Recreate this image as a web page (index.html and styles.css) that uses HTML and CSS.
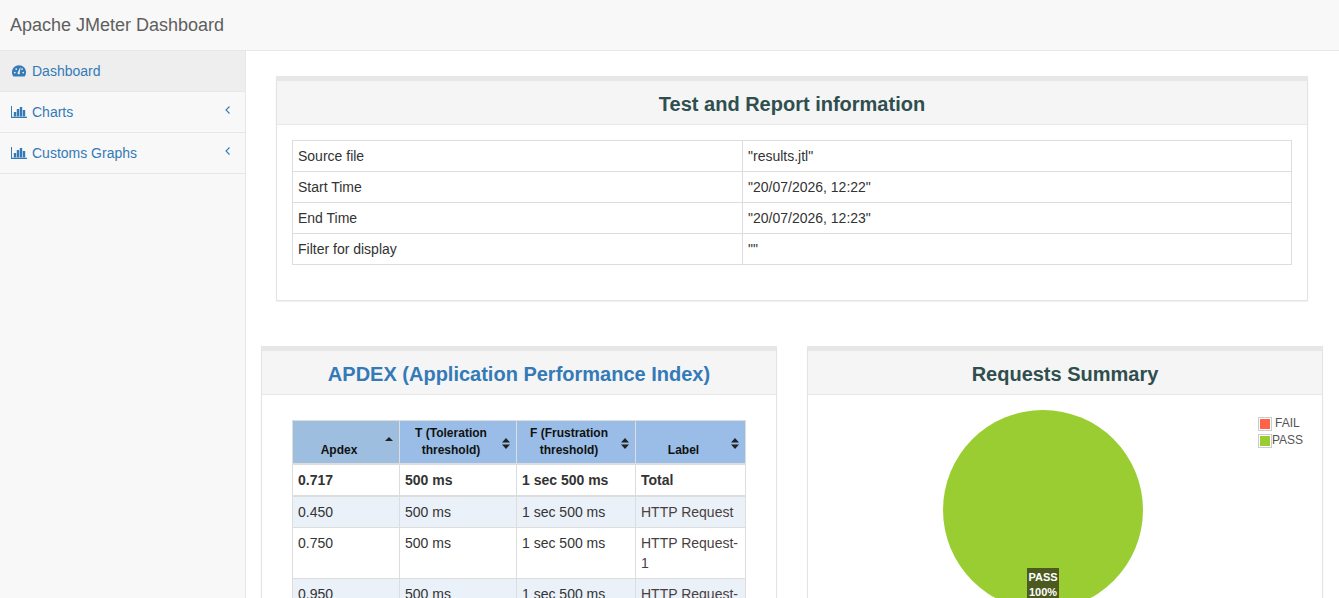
FILE: index.html
```html
<!DOCTYPE html>
<html lang="en">
<head>
  <meta charset="UTF-8">
  <meta name="viewport" content="width=device-width, initial-scale=1.0">
  <title>Apache JMeter Dashboard</title>
  <link rel="stylesheet" href="styles.css">
</head>
<body>
  <nav class="navbar">
    <a class="brand" href="#">Apache JMeter Dashboard</a>
  </nav>

  <div class="layout">
    <!-- Sidebar -->
    <aside class="sidebar">
      <a class="side-item active" href="#">
        <svg class="side-icon gauge" viewBox="0 0 14 12"><path fill-rule="evenodd" d="M7 .3C3.100.3 0 3.400 0 7.300c0 1.600.5 3 1.300 4.200h11.400c.8-1.200 1.300-2.600 1.300-4.200C14 3.400 10.900.3 7 .3zM2.800 8.500a.9.9 0 1 1 0-1.800.9.9 0 0 1 0 1.800zM4.200 5a.9.9 0 1 1 0-1.800.9.9 0 0 1 0 1.800zM7.700 8.800a1.200 1.200 0 0 1-1.900-1.500L8.100 2.400l.5.200-.9 4.800c.3.400.3 1 0 1.400zM10 5a.9.9 0 1 1 0-1.800.9.9 0 0 1 0 1.800zM11.200 8.500a.9.9 0 1 1 0-1.800.9.9 0 0 1 0 1.800z"/></svg>
        <span>Dashboard</span>
      </a>
      <a class="side-item" href="#">
        <svg class="side-icon" viewBox="0 0 16 12"><path d="M0 0h1v10.800h15V12H0z"/><path d="M2.800 6h2.400v4.500H2.800zM5.800 3h2.400v7.500H5.800zM8.800 1h2.400v9.500H8.800zM11.800 4h2.400v6.500h-2.400z"/></svg>
        <span>Charts</span>
        <svg class="side-arrow" viewBox="0 0 5 8"><path d="M4.500.5 1 4l3.500 3.500" fill="none" stroke="currentColor" stroke-width="1.100"/></svg>
      </a>
      <a class="side-item" href="#">
        <svg class="side-icon" viewBox="0 0 16 12"><path d="M0 0h1v10.800h15V12H0z"/><path d="M2.800 6h2.400v4.500H2.800zM5.800 3h2.400v7.500H5.800zM8.800 1h2.400v9.500H8.800zM11.800 4h2.400v6.500h-2.400z"/></svg>
        <span>Customs Graphs</span>
        <svg class="side-arrow" viewBox="0 0 5 8"><path d="M4.500.5 1 4l3.500 3.500" fill="none" stroke="currentColor" stroke-width="1.100"/></svg>
      </a>
    </aside>

    <main class="content">
      <!-- Test and Report information -->
      <section class="panel panel-info">
        <h2 class="panel-heading">Test and Report information</h2>
        <div class="panel-body info-body">
          <table class="info-table">
            <tr><td class="info-key">Source file</td><td>"results.jtl"</td></tr>
            <tr><td class="info-key">Start Time</td><td>"20/07/2026, 12:22"</td></tr>
            <tr><td class="info-key">End Time</td><td>"20/07/2026, 12:23"</td></tr>
            <tr><td class="info-key">Filter for display</td><td>""</td></tr>
          </table>
        </div>
      </section>

      <div class="panel-row">
        <!-- APDEX -->
        <section class="panel">
          <h2 class="panel-heading heading-link">APDEX (Application Performance Index)</h2>
          <div class="panel-body apdex-body">
            <table class="apdex-table">
              <colgroup>
                <col class="col-apdex"><col class="col-t"><col class="col-f"><col class="col-label">
              </colgroup>
              <thead>
                <tr>
                  <th class="sorted">Apdex
                    <svg class="sort-icon sort-up" viewBox="0 0 8 4"><path d="M4 0l4 4H0z"/></svg>
                  </th>
                  <th>T (Toleration threshold)
                    <svg class="sort-icon" viewBox="0 0 8 11"><path d="M4 0l4 4.500H0zM4 11 0 6.500h8z"/></svg>
                  </th>
                  <th>F (Frustration threshold)
                    <svg class="sort-icon" viewBox="0 0 8 11"><path d="M4 0l4 4.500H0zM4 11 0 6.500h8z"/></svg>
                  </th>
                  <th>Label
                    <svg class="sort-icon" viewBox="0 0 8 11"><path d="M4 0l4 4.500H0zM4 11 0 6.500h8z"/></svg>
                  </th>
                </tr>
              </thead>
              <tbody>
                <tr class="total-row"><td>0.717</td><td>500 ms</td><td>1 sec 500 ms</td><td>Total</td></tr>
                <tr class="odd"><td>0.450</td><td>500 ms</td><td>1 sec 500 ms</td><td class="label-cell">HTTP Request</td></tr>
                <tr><td>0.750</td><td>500 ms</td><td>1 sec 500 ms</td><td class="label-cell">HTTP Request-1</td></tr>
                <tr class="odd"><td>0.950</td><td>500 ms</td><td>1 sec 500 ms</td><td class="label-cell">HTTP Request-2</td></tr>
              </tbody>
            </table>
          </div>
        </section>

        <!-- Requests Summary -->
        <section class="panel">
          <h2 class="panel-heading">Requests Summary</h2>
          <div class="panel-body chart-body">
            <div class="pie">
              <div class="pie-label">PASS<br>100%</div>
            </div>
            <div class="legend">
              <div class="legend-row"><span class="swatch"><i class="swatch-fail"></i></span><span class="legend-fail">FAIL</span></div>
              <div class="legend-row"><span class="swatch"><i class="swatch-pass"></i></span><span>PASS</span></div>
            </div>
          </div>
        </section>
      </div>
    </main>
  </div>
</body>
</html>
```

FILE: styles.css
```css
/* General page styling */
html,
body {
  height: 598px;
  overflow: hidden;
}

body {
  margin: 0;
  font-family: "Liberation Sans", Arial, sans-serif;
  font-size: 14px;
  line-height: 20px;
  color: #333;
  background-color: #fff;
}

a {
  text-decoration: none;
}

/* Top navbar */
.navbar {
  height: 50px;
  background-color: #f8f8f8;
  border-bottom: 1px solid #e7e7e7;
  display: flex;
  align-items: center;
  padding-left: 10px;
}

.brand {
  font-size: 18px;
  color: #5e5e5e;
}

.layout {
  display: flex;
  align-items: stretch;
  height: 547px;
}

/* Sidebar */
.sidebar {
  width: 245px;
  flex-shrink: 0;
  background-color: #f8f8f8;
  border-right: 1px solid #e7e7e7;
}

.side-item {
  display: flex;
  align-items: center;
  height: 40px;
  padding-left: 11px;
  padding-right: 15px;
  color: #337ab7;
  border-bottom: 1px solid #e7e7e7;
}

.side-item.active {
  background-color: #eee;
}

.side-icon {
  width: 16px;
  height: 12px;
  margin-right: 5px;
  fill: #337ab7;
  flex-shrink: 0;
}

.side-icon.gauge {
  width: 14px;
  margin-left: 1px;
  margin-right: 6px;
}

.side-arrow {
  width: 5px;
  height: 8px;
  margin-left: auto;
  margin-bottom: 5px;
  color: #337ab7;
}

/* Main content */
.content {
  flex: 1;
  padding: 25px 16px 0 15px;
  min-width: 0;
}

.panel {
  background-color: #fff;
  border: 1px solid #e3e3e3;
  border-top: 5px solid #e7e7e7;
  box-shadow: 0 1px 1px rgba(0, 0, 0, 0.05);
  flex: 1;
  min-width: 0;
}

.panel-info {
  margin: 0 15px 45px;
}

.panel-heading {
  margin: 0;
  height: 43px;
  background-color: #f5f5f5;
  border-bottom: 1px solid #e7e7e7;
  font-size: 20px;
  line-height: 46px;
  font-weight: bold;
  text-align: center;
  color: #2f4f4f;
}

.heading-link {
  color: #337ab7;
}

.panel-row {
  display: flex;
  gap: 30px;
}

/* Report info table */
.info-body {
  padding: 15px 15px 35px;
}

.info-table {
  width: 1000px;
  border-collapse: collapse;
  table-layout: fixed;
}

.info-table td {
  border: 1px solid #ddd;
  padding: 5px;
}

.info-key {
  width: 439px;
}

/* APDEX table */
.apdex-body {
  padding: 25px 30px 0;
}

.apdex-table {
  width: 453px;
  border-collapse: collapse;
  table-layout: fixed;
}

.col-apdex { width: 107px; }
.col-t { width: 117px; }
.col-f { width: 119px; }
.col-label { width: 110px; }

.apdex-table th {
  position: relative;
  background-color: #99bde6;
  border: 1px solid #ddd;
  border-bottom-width: 2px;
  padding: 4px 20px 4px 6px;
  font-size: 12px;
  line-height: 17px;
  color: #111;
  text-align: center;
  vertical-align: bottom;
}

.apdex-table th.sorted {
  background-color: #9dbedf;
}

.sort-icon {
  position: absolute;
  right: 6px;
  top: 17px;
  width: 8px;
  height: 11px;
  fill: #222;
}

.sort-icon.sort-up {
  top: 16px;
  height: 4px;
}

.apdex-table td {
  border: 1px solid #ddd;
  padding: 5px;
  vertical-align: top;
  overflow-wrap: break-word;
}

.total-row td {
  font-weight: bold;
  border-bottom-width: 2px;
}

.odd td {
  background-color: #eaf1f9;
}

.apdex-table .label-cell {
  color: #4a3f3f;
}

/* Pie chart */
.chart-body {
  position: relative;
  height: 300px;
  padding-top: 15px;
}

.pie {
  position: relative;
  width: 200px;
  height: 200px;
  margin-left: 135px;
  border-radius: 50%;
  background-color: #9acd32;
}

.pie-label {
  position: absolute;
  left: 84px;
  top: 158px;
  width: 32px;
  background-color: #4d5a1f;
  color: #fff;
  font-size: 11px;
  font-weight: bold;
  line-height: 15px;
  text-align: center;
  padding: 2px 0;
}

.legend {
  position: absolute;
  top: 20px;
  left: 450px;
  font-size: 12px;
  line-height: 17px;
  color: #545454;
}

.legend-row {
  display: flex;
  align-items: center;
}

.legend-fail {
  margin-left: 3px;
}

.swatch {
  display: flex;
  width: 10px;
  height: 10px;
  padding: 1px;
  border: 1px solid #ccc;
}

.swatch i {
  display: block;
  width: 100%;
  height: 100%;
}

.swatch-fail {
  background-color: #ff6347;
}

.swatch-pass {
  background-color: #9acd32;
}
```
